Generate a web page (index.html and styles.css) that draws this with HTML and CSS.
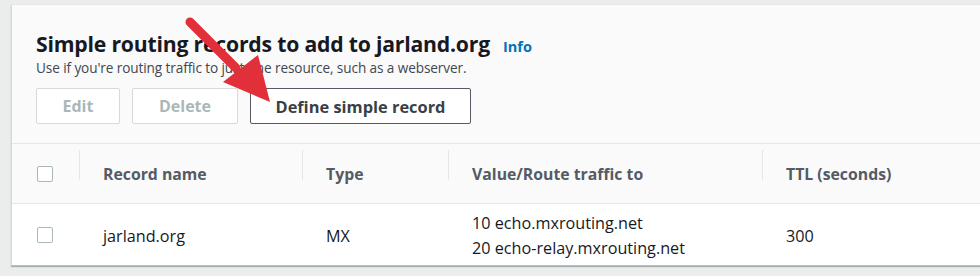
FILE: index.html
```html
<!DOCTYPE html>
<html lang="en">
<head>
    <meta charset="UTF-8">
    <title>Simple routing records</title>
    <link rel="stylesheet" href="styles.css">
</head>
<body>
    <div class="card">
        <div class="card-header">
            <div class="title-line">
                <h2>Simple routing records to add to jarland.org</h2>
                <a class="info-link">Info</a>
            </div>
            <p class="description">Use if you're routing traffic to just one resource, such as a webserver.</p>
            <div class="actions">
                <button class="btn btn-disabled">Edit</button>
                <button class="btn btn-disabled btn-delete">Delete</button>
                <button class="btn btn-normal">Define simple record</button>
            </div>
        </div>

        <div class="records">
            <div class="row head-row">
                <div class="cell check-cell"><span class="checkbox"></span></div>
                <div class="cell"><span class="sep"></span>Record name</div>
                <div class="cell"><span class="sep"></span>Type</div>
                <div class="cell"><span class="sep"></span>Value/Route traffic to</div>
                <div class="cell"><span class="sep"></span>TTL (seconds)</div>
            </div>
            <div class="row body-row">
                <div class="cell check-cell"><span class="checkbox"></span></div>
                <div class="cell">jarland.org</div>
                <div class="cell">MX</div>
                <div class="cell value-cell">
                    <div>10 echo.mxrouting.net</div>
                    <div>20 echo-relay.mxrouting.net</div>
                </div>
                <div class="cell">300</div>
            </div>
        </div>
    </div>

    <!-- red pointer drawn on top of the screenshot -->
    <svg class="arrow" width="110" height="100" viewBox="0 0 110 100">
        <line x1="20" y1="12" x2="66" y2="58" stroke="#e2303b" stroke-width="9" stroke-linecap="round"/>
        <polygon points="100,92 53,72 88,45" fill="#e2303b"/>
    </svg>
</body>
</html>
```

FILE: styles.css
```css
body {
    margin: 0;
    padding: 4px 0 0 11px;
    background: #ebeded;
    font-family: "Open Sans", Arial, sans-serif;
    color: #16191f;
    height: 276px;
    overflow: hidden;
    box-sizing: border-box;
}
.card {
    width: 1000px;
    background: #fafafa;
    border-left: 1px solid #d5dbdb;
    border-top: 1px solid #e4e7e7;
    box-shadow: 0 1px 1px 0 rgba(0, 28, 36, 0.3);
    border-bottom: 1px solid #b8c2c3;
}
.card-header {
    padding: 25px 24px 19px 24px;
}
.title-line {
    display: flex;
    align-items: baseline;
    gap: 13px;
}
h2 {
    margin: 0;
    font-size: 21.2px;
    line-height: 27px;
    font-weight: 700;
    letter-spacing: -0.2px;
    color: #16191f;
}
.info-link {
    color: #0073bb;
    font-weight: 700;
    font-size: 14.5px;
}
.description {
    margin: 1px 0 0;
    font-size: 13.6px;
    line-height: 20px;
    color: #414750;
    letter-spacing: -0.1px;
}
.actions {
    display: flex;
    gap: 12px;
    margin-top: 10px;
}
.btn {
    height: 36px;
    padding: 0;
    font-family: inherit;
    font-size: 16px;
    font-weight: 700;
    background: #fff;
    border-radius: 2px;
    border: 1px solid #545b64;
    color: #545b64;
}
.btn-disabled {
    border-color: #d5dbdb;
    color: #aab7b8;
    width: 84px;
}
.btn-delete {
    width: 106px;
}
.btn-normal {
    width: 221px;
    color: #393f46;
    font-size: 16.4px;
}
.records {
    border-top: 1px solid #e4e7e7;
}
.row {
    display: grid;
    grid-template-columns: 67px 223px 146px 314px 1fr;
    align-items: center;
}
.head-row {
    height: 59px;
    background: #fafafa;
    border-bottom: 1px solid #e4e7e7;
    font-weight: 700;
    color: #545b64;
    font-size: 15.8px;
}
.body-row {
    height: 61px;
    box-sizing: border-box;
    padding-top: 2px;
    background: #fff;
    font-size: 16.2px;
    color: #16191f;
}
.cell {
    position: relative;
    padding-left: 24px;
    white-space: nowrap;
}
.check-cell {
    padding-left: 25px;
    display: flex;
}
.body-row .check-cell {
    margin-top: -2px;
}
.sep {
    position: absolute;
    left: 0;
    top: -13px;
    height: 30px;
    border-left: 1px solid #e4e7e7;
}
.checkbox {
    width: 14px;
    height: 14px;
    border: 1px solid #aab7b8;
    border-radius: 2px;
    background: #fff;
}
.value-cell {
    line-height: 25px;
}
.arrow {
    position: absolute;
    left: 170px;
    top: 10px;
}
```
